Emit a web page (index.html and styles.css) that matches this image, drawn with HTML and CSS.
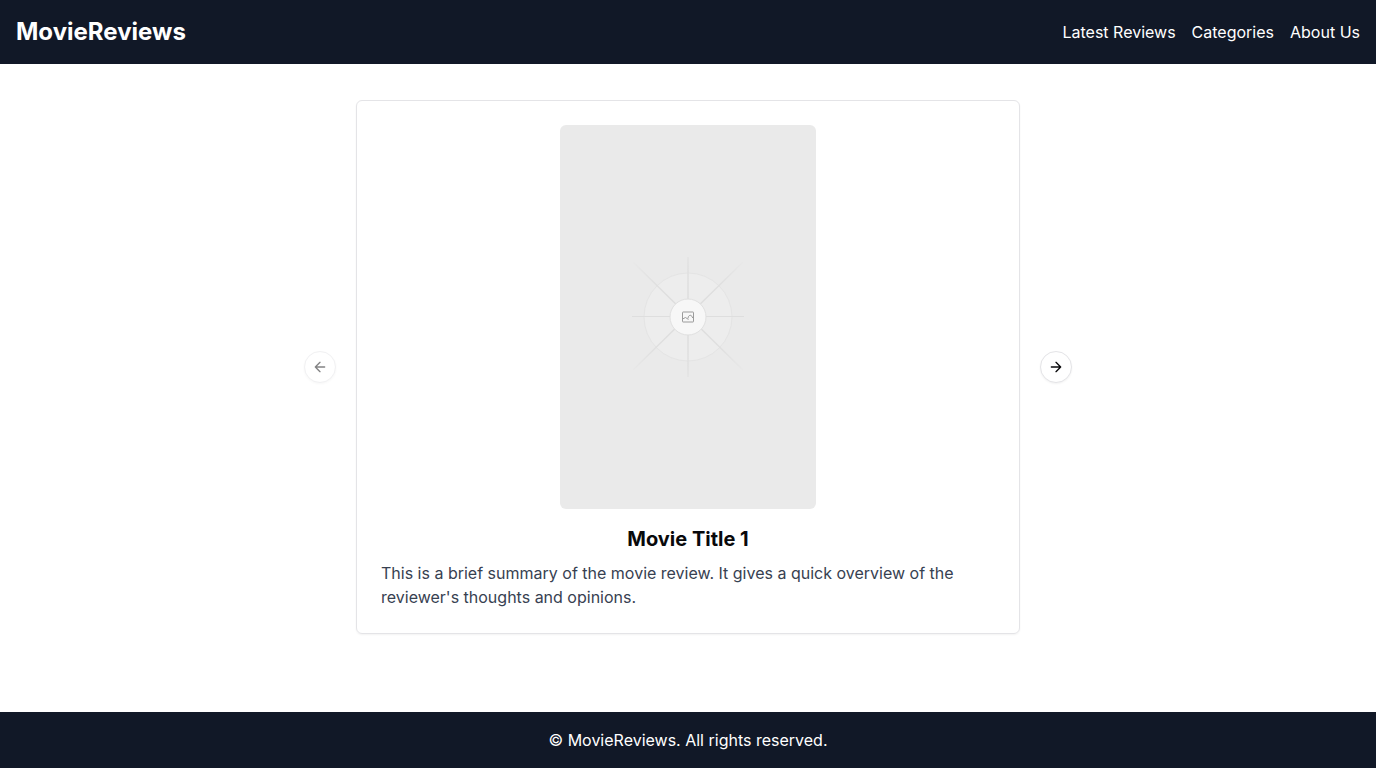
FILE: index.html
```html
<!DOCTYPE html>
<html lang="en">
<head>
<meta charset="utf-8">
<meta name="viewport" content="width=device-width, initial-scale=1">
<title>MovieReviews</title>
<link rel="stylesheet" href="styles.css">
</head>
<body>
<header class="site-header">
  <h1 class="brand">MovieReviews</h1>
  <nav class="site-nav" aria-label="Main">
    <a href="#latest">Latest Reviews</a>
    <a href="#categories">Categories</a>
    <a href="#about">About Us</a>
  </nav>
</header>
<main class="content">
  <section class="carousel" aria-label="Movie reviews">
    <button class="arrow" type="button" aria-label="Previous slide" disabled>
      <svg viewBox="0 0 24 24" aria-hidden="true"><path d="m12 19-7-7 7-7M19 12H5"/></svg>
    </button>
    <article class="card">
      <svg class="poster" viewBox="0 0 256 384" role="img" aria-label="Movie poster">
        <defs>
          <radialGradient id="fade" gradientUnits="userSpaceOnUse" cx="128" cy="192" r="82">
            <stop offset="0" stop-color="#dcdcdc"/>
            <stop offset="0.6" stop-color="#e0e0e0"/>
            <stop offset="1" stop-color="#eaeaea"/>
          </radialGradient>
        </defs>
        <rect width="256" height="384" fill="#eaeaea"/>
        <circle cx="128" cy="192" r="44" fill="#ededed" stroke="#e4e4e4"/>
        <path d="M72 191.500H184" fill="none" stroke="#dedede"/>
        <path d="M128 132V252M73 137L183 245M183 137L73 245" fill="none" stroke="url(#fade)" stroke-width="1.500"/>
        <circle cx="128" cy="192" r="18" fill="#f7f7f7" stroke="#e0e0e0"/>
        <g fill="none" stroke="#9b9b9b" stroke-linejoin="round">
          <rect x="122.500" y="187" width="11" height="10" rx="0.500"/>
          <path d="M122.500 194L125.500 192.500L128.500 194.500M128 193.500C128 189.500 132 189.500 132 192L133.500 193.500"/>
        </g>
      </svg>
      <h2 class="title">Movie Title 1</h2>
      <p class="summary">This is a brief summary of the movie review. It gives a quick overview of the reviewer's thoughts and opinions.</p>
    </article>
    <button class="arrow" type="button" aria-label="Next slide">
      <svg viewBox="0 0 24 24" aria-hidden="true"><path d="M5 12h14M12 5l7 7-7 7"/></svg>
    </button>
  </section>
</main>
<footer class="site-footer"><p>© MovieReviews. All rights reserved.</p></footer>
</body>
</html>
```
FILE: styles.css
```css
*, *::before, *::after { box-sizing: border-box; }

body {
  margin: 0;
  min-height: 100vh;
  display: flex;
  flex-direction: column;
  background: #fff;
  color: #09090b;
  font-family: Inter, "Liberation Sans", sans-serif;
  font-size: 16px;
  line-height: 24px;
}

h1, h2, p { margin: 0; }

.site-header {
  display: flex;
  flex-wrap: wrap;
  align-items: center;
  justify-content: space-between;
  gap: 16px;
  padding: 16px;
  background: #111827;
  color: #fff;
}

.brand {
  font-size: 24px;
  line-height: 32px;
  font-weight: 700;
}

.site-nav {
  display: flex;
  gap: 16px;
}

.site-nav a {
  color: inherit;
  text-decoration: none;
}

.site-nav a:hover { text-decoration: underline; }

.content {
  flex: 1;
  padding: 36px 16px;
}

.carousel {
  display: flex;
  align-items: center;
  gap: 20px;
  max-width: 768px;
  margin: 0 auto;
}

.card {
  flex: 1;
  min-width: 0;
  display: flex;
  flex-direction: column;
  align-items: center;
  padding: 24px;
  border: 1px solid #e4e4e7;
  border-radius: 6px;
  box-shadow: 0 1px 2px rgba(0, 0, 0, 0.05);
}

.poster {
  display: block;
  width: 256px;
  max-width: 100%;
  border-radius: 6px;
  margin-bottom: 16px;
}

.title {
  margin-bottom: 8px;
  font-size: 20px;
  line-height: 28px;
  font-weight: 700;
}

.summary {
  width: 100%;
  color: #374151;
}

.arrow {
  flex: none;
  display: flex;
  align-items: center;
  justify-content: center;
  width: 32px;
  height: 32px;
  padding: 0;
  border: 1px solid #e4e4e7;
  border-radius: 50%;
  background: #fff;
  color: #09090b;
  box-shadow: 0 1px 2px rgba(0, 0, 0, 0.05);
  cursor: pointer;
}

.arrow:disabled {
  opacity: 0.5;
  cursor: default;
}

.arrow svg {
  width: 16px;
  height: 16px;
  fill: none;
  stroke: currentColor;
  stroke-width: 2;
  stroke-linecap: round;
  stroke-linejoin: round;
}

.site-footer {
  padding: 16px;
  background: #111827;
  color: #fff;
  text-align: center;
}
```
